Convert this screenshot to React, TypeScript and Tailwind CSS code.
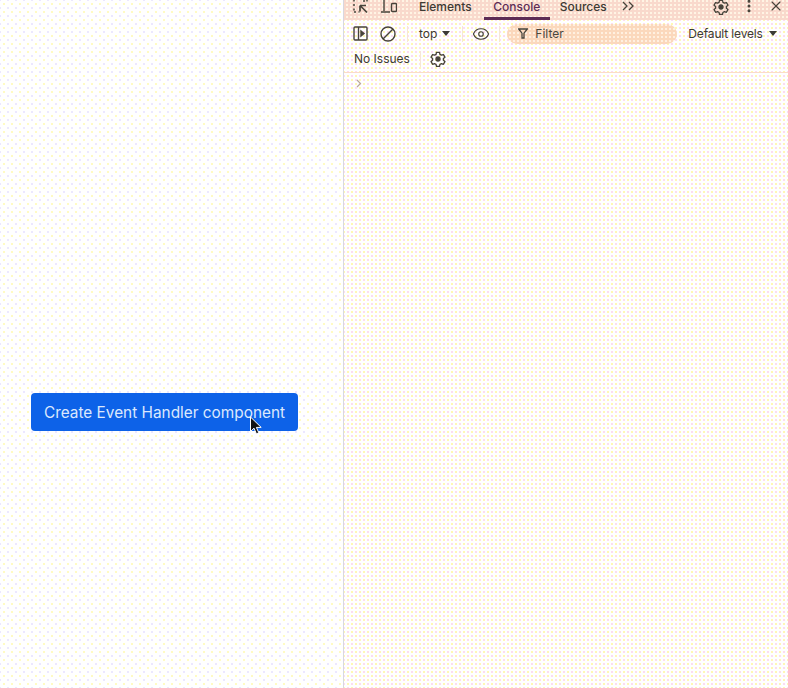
import { EllipsisVertical, Eye, X } from "lucide-react";

const iconColor = "#47433a";

function Gear({ size = 16 }: { size?: number }) {
  return (
    <svg width={size} height={size} viewBox="0 0 24 24" fill="none" stroke={iconColor} strokeWidth="2" strokeLinejoin="round">
      <path d="M9.7 2h4.6l.6 3 2.3 1.3 2.9-1 2.3 4-2.3 2v2.6l2.3 2-2.3 4-2.9-1-2.3 1.3-.6 3H9.7l-.6-3-2.3-1.3-2.9 1-2.3-4 2.3-2v-2.6l-2.3-2 2.3-4 2.9 1L9.1 5z" />
      <circle cx="12" cy="12" r="3" fill={iconColor} />
    </svg>
  );
}

function Caret() {
  return <span className="h-0 w-0 border-x-[4px] border-t-[5px] border-x-transparent border-t-[#3c3a34]" />;
}

function Sep() {
  return <span className="block h-4 w-px bg-[#f6e6d6]" />;
}

function Tabs() {
  return (
    <div className="flex h-[20px] items-start bg-[#f9d9cc] bg-[image:conic-gradient(#fff4e4_25%,transparent_0)] bg-[length:4px_4px] pl-[9px] text-[12px] leading-[14px] text-[#3d3a33]">
      <svg width="16" height="14" viewBox="0 0 16 14" fill="none" stroke={iconColor} strokeWidth="1.5">
        <path d="M1 0v1.5M1 4v2M1 8.5v2M1 12h2M10 1h2M5.500 12h1M14 0v1.5" />
        <path d="M7 5.500v6M7 5.500h6M7 5.500l7 7" strokeWidth="1.7" />
      </svg>
      <svg className="ml-[12px]" width="16" height="14" viewBox="0 0 16 14" fill="none" stroke={iconColor} strokeWidth="1.4">
        <path d="M3 0v11M0 12h9" />
        <rect x="10.500" y="3.500" width="5" height="8" rx="1" />
      </svg>
      <span className="ml-[22px] font-medium">Elements</span>
      <div className="ml-[12px] flex h-[20px] w-[66px] justify-center border-b-[3px] border-[#5d2c55] font-medium text-[#5d2c55]">
        Console
      </div>
      <span className="ml-[10px] font-medium">Sources</span>
      <svg className="ml-[15px] mt-[1px]" width="13" height="10" viewBox="0 0 13 10" fill="none" stroke={iconColor} strokeWidth="1.3">
        <path d="M1 1l4 4-4 4M7 1l4 4-4 4" />
      </svg>
      <div className="ml-[78px] -mt-[1px]">
        <Gear />
      </div>
      <EllipsisVertical className="ml-[12px] -mt-[2px]" size={16} color={iconColor} strokeWidth={2.5} />
      <X className="ml-[11px] -mt-[2px]" size={16} color={iconColor} strokeWidth={1.7} />
    </div>
  );
}

function ConsoleToolbar() {
  return (
    <div className="flex h-[26px] items-center pl-[9px] pt-[1px] text-[12px] text-[#3d3a33]">
      <svg width="15" height="15" viewBox="0 0 15 15" fill="none" stroke={iconColor} strokeWidth="1.4">
        <rect x="1" y="1" width="13" height="13" rx="1" />
        <path d="M5.500 1v13" />
        <path d="M8 5l3 2.500L8 10z" fill={iconColor} />
      </svg>
      <svg className="ml-[12px]" width="16" height="16" viewBox="0 0 16 16" fill="none" stroke={iconColor} strokeWidth="1.4">
        <circle cx="8" cy="8" r="7" />
        <path d="M3 13L13 3" />
      </svg>
      <div className="ml-[11px]">
        <Sep />
      </div>
      <span className="ml-[11px]">top</span>
      <div className="ml-[5px] flex">
        <Caret />
      </div>
      <div className="ml-[12px]">
        <Sep />
      </div>
      <Eye className="ml-[9px]" size={18} color={iconColor} strokeWidth={1.6} />
      <div className="ml-[9px]">
        <Sep />
      </div>
      <div className="ml-[7px] flex h-[20px] w-[170px] items-center rounded-full bg-[#fbd8bc] bg-[image:conic-gradient(#fff0e0_25%,transparent_0)] bg-[length:4px_4px] pl-[11px]">
        <svg width="10" height="11" viewBox="0 0 10 11" fill="none" stroke={iconColor} strokeWidth="1.3">
          <path d="M.7 1h8.600L6 5.200V10H4V5.200z" />
        </svg>
        <span className="ml-[7px] text-[#4a463c]">Filter</span>
      </div>
      <span className="ml-[11px] tracking-[-0.15px]">Default levels</span>
      <div className="ml-[6px] flex">
        <Caret />
      </div>
    </div>
  );
}

function IssuesBar() {
  return (
    <div className="flex h-[27px] items-center border-b border-[#fbdcc8] pl-[10px] text-[12px] text-[#3d3a33]">
      <span>No Issues</span>
      <div className="ml-[10px]">
        <Sep />
      </div>
      <div className="ml-[9px]">
        <Gear />
      </div>
    </div>
  );
}

export default function App() {
  return (
    <div className="relative flex h-[688px] w-[788px] overflow-hidden bg-white bg-[image:radial-gradient(#fffbc4_1px,transparent_1px),radial-gradient(#ece8ff_1px,transparent_1px)] bg-[length:8px_8px] bg-[position:0_0,4px_4px] font-['Inter',sans-serif]">
      <div className="w-[344px] shrink-0 border-r border-[#d8d8e0] pl-[31px] pt-[393px]">
        <button className="h-[38px] w-[267px] rounded-[4px] bg-[#0d62e8] pt-[1px] text-[15.36px] text-[#dbe8fd]">
          Create Event Handler component
        </button>
      </div>
      <div className="min-w-0 flex-1 bg-white bg-[image:radial-gradient(#fff8b4_1px,transparent_1px),radial-gradient(#fff8b4_1px,transparent_1px),radial-gradient(#fbdcf2_1px,transparent_1px),radial-gradient(#fbdcf2_1px,transparent_1px)] bg-[length:8px_8px] bg-[position:0_0,4px_4px,4px_0,0_4px]">
        <Tabs />
        <ConsoleToolbar />
        <IssuesBar />
        <div className="pl-[12px] pt-[6px]">
          <svg width="6" height="9" viewBox="0 0 6 9" fill="none" stroke="#b9a79c" strokeWidth="1.2">
            <path d="M1 1l3.500 3.500L1 8" />
          </svg>
        </div>
      </div>
      <svg className="absolute left-[249px] top-[416px]" width="14" height="20" viewBox="0 0 14 20">
        <path d="M1.500 1v14.500l3.500-3.300 2.400 5.600 2.400-1-2.400-5.400h4.800z" fill="#111" stroke="#fff" strokeWidth="1" />
      </svg>
    </div>
  );
}
